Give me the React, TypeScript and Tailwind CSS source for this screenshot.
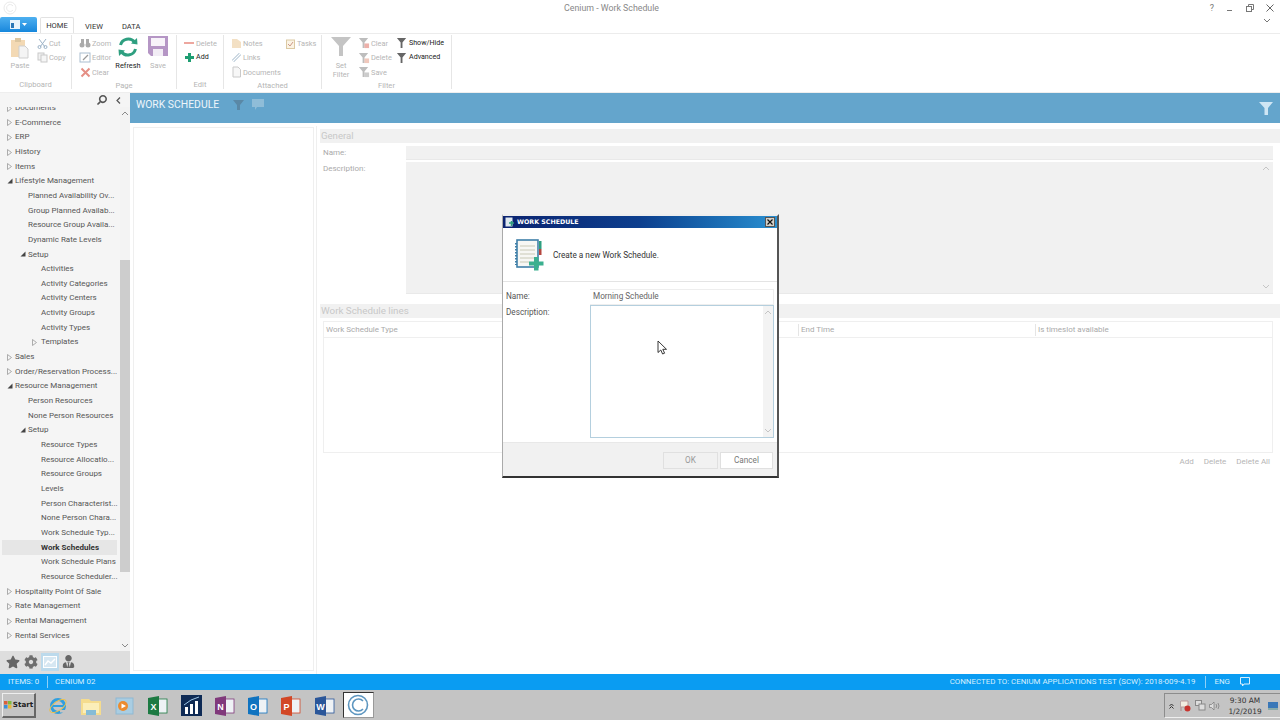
import React from "react";
import { FaCog, FaStar, FaUserTie, FaSearch } from "react-icons/fa";

const font = "font-['Roboto','Noto_Sans',sans-serif]";

type TreeRow = { label: string; level: number; arrow?: "open" | "closed"; selected?: boolean };

const tree: TreeRow[] = [
  { label: "Documents", level: 0, arrow: "closed" },
  { label: "E-Commerce", level: 0, arrow: "closed" },
  { label: "ERP", level: 0, arrow: "closed" },
  { label: "History", level: 0, arrow: "closed" },
  { label: "Items", level: 0, arrow: "closed" },
  { label: "Lifestyle Management", level: 0, arrow: "open" },
  { label: "Planned Availability Ov...", level: 1 },
  { label: "Group Planned Availab...", level: 1 },
  { label: "Resource Group Availa...", level: 1 },
  { label: "Dynamic Rate Levels", level: 1 },
  { label: "Setup", level: 1, arrow: "open" },
  { label: "Activities", level: 2 },
  { label: "Activity Categories", level: 2 },
  { label: "Activity Centers", level: 2 },
  { label: "Activity Groups", level: 2 },
  { label: "Activity Types", level: 2 },
  { label: "Templates", level: 2, arrow: "closed" },
  { label: "Sales", level: 0, arrow: "closed" },
  { label: "Order/Reservation Process...", level: 0, arrow: "closed" },
  { label: "Resource Management", level: 0, arrow: "open" },
  { label: "Person Resources", level: 1 },
  { label: "None Person Resources", level: 1 },
  { label: "Setup", level: 1, arrow: "open" },
  { label: "Resource Types", level: 2 },
  { label: "Resource Allocatio...", level: 2 },
  { label: "Resource Groups", level: 2 },
  { label: "Levels", level: 2 },
  { label: "Person Characterist...", level: 2 },
  { label: "None Person Chara...", level: 2 },
  { label: "Work Schedule Typ...", level: 2 },
  { label: "Work Schedules", level: 2, selected: true },
  { label: "Work Schedule Plans", level: 2 },
  { label: "Resource Scheduler...", level: 2 },
  { label: "Hospitality Point Of Sale", level: 0, arrow: "closed" },
  { label: "Rate Management", level: 0, arrow: "closed" },
  { label: "Rental Management", level: 0, arrow: "closed" },
  { label: "Rental Services", level: 0, arrow: "closed" },
];

function Chevron({ up = false, color = "#8a8a8a" }: { up?: boolean; color?: string }) {
  return (
    <svg width="8" height="5" viewBox="0 0 8 5">
      <path d={up ? "M1 4 L4 1 L7 4" : "M1 1 L4 4 L7 1"} fill="none" stroke={color} strokeWidth="1" />
    </svg>
  );
}

function TreeArrow({ kind }: { kind: "open" | "closed" }) {
  return kind === "open" ? (
    <svg width="6" height="6" viewBox="0 0 6 6">
      <path d="M5.5 0.5 V5.5 H0.5 Z" fill="#444" />
    </svg>
  ) : (
    <svg width="5" height="7" viewBox="0 0 5 7">
      <path d="M0.5 0.5 L4.5 3.5 L0.5 6.5 Z" fill="none" stroke="#999" strokeWidth="0.8" />
    </svg>
  );
}

function Sidebar() {
  return (
    <div className="flex w-[130px] flex-col bg-[#f5f5f5]">
      <div className="flex h-[14px] items-center justify-end gap-[9px] pr-[9px]">
        <FaSearch size={10} className="-scale-x-100 text-[#555]" />
        <svg width="5" height="7" viewBox="0 0 5 7">
          <path d="M4 0.5 L1 3.5 L4 6.5" fill="none" stroke="#555" strokeWidth="1.2" />
        </svg>
      </div>
      <div className="flex h-[544px] overflow-hidden">
        <div className="w-[120px] overflow-hidden pl-[2px]">
          <div className="-mt-[6.75px] flex flex-col">
            {tree.map((row, i) => (
              <div
                key={i}
                className={`relative flex h-[14.67px] w-[115px] items-center whitespace-nowrap text-[8px] leading-none ${
                  row.selected ? "bg-[#e6e6e6] font-bold text-[#333]" : "text-[#555]"
                } ${row.level === 0 ? "pl-[13px]" : row.level === 1 ? "pl-[26px]" : "pl-[39px]"}`}
              >
                {row.arrow && (
                  <span
                    className={`absolute top-[4px] ${
                      row.level === 0 ? "left-[5px]" : row.level === 1 ? "left-[18px]" : "left-[30px]"
                    }`}
                  >
                    <TreeArrow kind={row.arrow} />
                  </span>
                )}
                {row.label}
              </div>
            ))}
          </div>
        </div>
        <div className="flex w-[10px] flex-col bg-[#f3f3f3]">
          <div className="flex h-[12px] items-center justify-center">
            <Chevron up />
          </div>
          <div className="mt-[141px] h-[312px] w-[10px] bg-[#cdcdcd]" />
          <div className="mt-auto flex h-[12px] items-center justify-center">
            <Chevron />
          </div>
        </div>
      </div>
      <div className="flex h-[23px] items-center bg-[#dedede] pb-[2px] pl-[6px]">
        <FaStar size={14} className="text-[#666]" />
        <FaCog size={14} className="ml-[4px] text-[#6e6e6e]" />
        <div className="ml-[3px] flex h-[18px] w-[18px] items-center justify-center bg-[#bcdaec]">
          <svg width="14" height="12" viewBox="0 0 14 12">
            <rect x="0.5" y="0.5" width="13" height="11" fill="#d6e7f2" stroke="#fff" />
            <path d="M2 9 L5 5 L8 7 L12 3" fill="none" stroke="#fff" strokeWidth="1.4" />
          </svg>
        </div>
        <FaUserTie size={13} className="ml-[3px] text-[#666]" />
      </div>
    </div>
  );
}

function Clip() {
  return (
    <svg width="20" height="22" viewBox="0 0 20 22">
      <rect x="1" y="3" width="14" height="17" fill="#f3d9b4" />
      <rect x="5" y="1" width="6" height="4" fill="#dcc6a0" />
      <path d="M9 9 H15 L18 12 V21 H9 Z" fill="#f4f4f4" stroke="#cfcfcf" />
    </svg>
  );
}

function FilterIcon({ color = "#bdbdbd", badge }: { color?: string; badge?: string }) {
  return (
    <svg width="12" height="12" viewBox="0 0 13 13">
      <path d="M1 1 H11 L7 6 V12 H5 V6 Z" fill={color} />
      {badge && <rect x="7" y="7" width="5" height="5" fill={badge} opacity="0.7" />}
    </svg>
  );
}

function Small({ icon, label, dark = false }: { icon: React.ReactNode; label: string; dark?: boolean }) {
  return (
    <div
      className={`flex h-[14.5px] shrink-0 items-center gap-[1px] whitespace-nowrap ${
        dark ? "text-[7.1px] text-[#222]" : "text-[7.4px] text-[#b5b5b5]"
      }`}
    >
      <span className="flex w-[12px] justify-center">{icon}</span>
      {label}
    </div>
  );
}

function Group({ label, width, children }: { label: string; width: string; children: React.ReactNode }) {
  return (
    <div className={`flex h-[54px] flex-col border-r border-[#e6e6e6] ${width}`}>
      <div className="flex h-[44px] pt-[1px]">{children}</div>
      <div className="mt-[2px] text-center text-[7.6px] leading-[9px] text-[#b5b5b5]">{label}</div>
    </div>
  );
}

function Ribbon() {
  const g = "#c9c9c9";
  return (
    <div className="flex h-[60px] border-t border-[#ececec] bg-white pt-[1px]">
      <Group label="Clipboard" width="w-[72px]">
        <div className="flex w-[36px] flex-col items-center pl-[4px] pt-[1px] text-[7.4px] text-[#b5b5b5]">
          <Clip />
          <span className="mt-[1px]">Paste</span>
        </div>
        <div className="flex flex-col">
          <Small label="Cut" icon={<svg width="11" height="11" viewBox="0 0 11 11"><path d="M2 1 L8 9 M9 1 L3 9" stroke="#9db3c7" fill="none" /><circle cx="2.5" cy="9" r="1.5" fill="none" stroke="#9db3c7" /><circle cx="8.5" cy="9" r="1.5" fill="none" stroke="#9db3c7" /></svg>} />
          <Small label="Copy" icon={<svg width="11" height="11" viewBox="0 0 11 11"><rect x="1" y="1" width="6" height="7" fill="#f1f1f1" stroke={g} /><rect x="4" y="3" width="6" height="7" fill="#f6f6f6" stroke={g} /></svg>} />
        </div>
      </Group>
      <Group label="Page" width="w-[105px]">
        <div className="flex w-[42px] flex-col pl-[7px]">
          <Small label="Zoom" icon={<svg width="12" height="11" viewBox="0 0 12 11"><circle cx="3" cy="7" r="2.5" fill="#aaa" /><circle cx="9" cy="7" r="2.5" fill="#aaa" /><rect x="2" y="1" width="3" height="5" fill="#aaa" /><rect x="7" y="1" width="3" height="5" fill="#aaa" /></svg>} />
          <Small label="Editor" icon={<svg width="12" height="11" viewBox="0 0 12 11"><rect x="1" y="1" width="10" height="9" fill="#fff" stroke="#a9bdcf" /><path d="M4 8 L9 3" stroke="#999" strokeWidth="1.3" /></svg>} />
          <Small label="Clear" icon={<svg width="11" height="11" viewBox="0 0 11 11"><path d="M1.5 1.5 L9.5 9.5 M9.5 1.5 L1.5 9.5" stroke="#e58f85" strokeWidth="2" /></svg>} />
        </div>
        <div className="flex w-[28px] flex-col items-center text-[7.4px] text-[#222]">
          <svg width="22" height="22" viewBox="0 0 22 22">
            <path d="M3.5 9 A8 8 0 0 1 17.5 6" fill="none" stroke="#2e9f80" strokeWidth="3" />
            <path d="M14 7.5 L20.5 8.5 L20 2 Z" fill="#2e9f80" />
            <path d="M18.5 13 A8 8 0 0 1 4.5 16" fill="none" stroke="#2e9f80" strokeWidth="3" />
            <path d="M8 14.5 L1.5 13.5 L2 20 Z" fill="#2e9f80" />
          </svg>
          <span className="mt-[2px]">Refresh</span>
        </div>
        <div className="flex w-[32px] flex-col items-center text-[7.4px] text-[#b5b5b5]">
          <svg width="20" height="20" viewBox="0 0 20 20">
            <path d="M0 0 H20 V20 H3 L0 17 Z" fill="#b596c5" />
            <rect x="3" y="2" width="14" height="8" fill="#f7f3f9" />
            <rect x="5" y="13" width="10" height="7" fill="#f2edf5" />
          </svg>
          <span className="mt-[4px]">Save</span>
        </div>
      </Group>
      <Group label="Edit" width="w-[47px]">
        <div className="flex flex-col pl-[6px]">
          <Small label="Delete" icon={<div className="h-[2px] w-[10px] bg-[#eda79f]" />} />
          <Small
            dark
            label="Add"
            icon={<svg width="11" height="11" viewBox="0 0 11 11"><path d="M5.5 1 V10 M1 5.5 H10" stroke="#1f9e72" strokeWidth="3" /></svg>}
          />
        </div>
      </Group>
      <Group label="Attached" width="w-[98px]">
        <div className="flex w-[60px] flex-col pl-[6px]">
          <Small label="Notes" icon={<svg width="11" height="11" viewBox="0 0 11 11"><path d="M1 1 H6 L10 4 V10 H1 Z" fill="#f3e0c4" /></svg>} />
          <Small label="Links" icon={<svg width="11" height="11" viewBox="0 0 11 11"><path d="M2 9 L9 2" stroke="#a9bdcf" strokeWidth="3" /><path d="M2 9 L9 2" stroke="#fff" strokeWidth="1.2" /></svg>} />
          <Small label="Documents" icon={<svg width="11" height="12" viewBox="0 0 11 12"><path d="M2 1 H7 L9.5 3.5 V11 H2 Z" fill="#f7f7f7" stroke={g} /></svg>} />
        </div>
        <div className="flex flex-col">
          <Small label="Tasks" icon={<svg width="11" height="11" viewBox="0 0 11 11"><rect x="1.5" y="2" width="8" height="8.5" fill="#fbf3e4" stroke="#dcc9a3" /><path d="M3 6 L5 8 L8 4" fill="none" stroke="#c98" /></svg>} />
        </div>
      </Group>
      <Group label="Filter" width="w-[130px]">
        <div className="flex w-[36px] flex-col items-center pl-[2px] text-center text-[7.4px] leading-[9px] text-[#b5b5b5]">
          <svg width="20" height="20" viewBox="0 0 20 20">
            <path d="M0 1 H20 L12 10 V20 H8 V10 Z" fill="#c4c4c4" />
          </svg>
          <span className="mt-[5px]">Set</span>
          <span>Filter</span>
        </div>
        <div className="flex w-[38px] flex-col">
          <Small label="Clear" icon={<FilterIcon badge="#e58f85" />} />
          <Small label="Delete" icon={<FilterIcon badge="#e9b0a0" />} />
          <Small label="Save" icon={<FilterIcon badge="#b7b7b7" />} />
        </div>
        <div className="flex flex-col">
          <Small dark label="Show/Hide" icon={<FilterIcon color="#666" />} />
          <Small dark label="Advanced" icon={<FilterIcon color="#666" />} />
        </div>
      </Group>
    </div>
  );
}

function Field({ className }: { className: string }) {
  return <div className={`border-b border-[#e9e9e9] bg-[#f1f1f1] ${className}`} />;
}

function MainArea() {
  return (
    <div className="flex flex-1 flex-col">
      <div className="flex h-[30px] items-start bg-[#64a5cc] pl-[6px] pt-[4px]">
        <span className="text-[10.4px] leading-[15px] text-[#eef6fb]">WORK SCHEDULE</span>
        <svg width="11" height="11" viewBox="0 0 11 11" className="ml-[14px] mt-[2px]">
          <path d="M0 1 H11 L7 6 V11 H4 V6 Z" fill="#5a88a6" />
        </svg>
        <svg width="12" height="11" viewBox="0 0 12 11" className="ml-[8px] mt-[2px]">
          <path d="M0 0 H12 V8 H5 L3 11 V8 H0 Z" fill="#8fbdd8" />
        </svg>
        <svg width="14" height="14" viewBox="0 0 14 14" className="ml-auto mr-[7px] mt-[4px]">
          <path d="M0 1 H14 L9 7 V14 H5.5 V7 Z" fill="#cfe6f4" />
        </svg>
      </div>
      <div className="flex flex-1 bg-white">
        <div className="ml-[3px] mt-[4px] h-[544px] w-[181px] border border-[#efefef]" />
        <div className="ml-[2px] mt-[3px] w-[1px] bg-[#efefef]" />
        <div className="ml-[3px] flex flex-1 flex-col pt-[6px]">
          <div className="flex h-[14px] items-center bg-[#f1f1f1] pl-[1px] text-[9.6px] text-[#c8c8c8]">General</div>
          <div className="mt-[3px] flex h-[14px] items-center text-[8px] text-[#aaa]">
            <span className="w-[86px] pl-[3px]">Name:</span>
            <Field className="mr-[7px] h-[14px] flex-1" />
          </div>
          <div className="mt-[2px] flex h-[132px] text-[8px] text-[#aaa]">
            <span className="w-[86px] pl-[3px] pt-[1px]">Description:</span>
            <div className="relative mr-[7px] flex flex-1 flex-col items-end justify-between border-b border-[#e9e9e9] bg-[#f1f1f1] px-[3px] py-[4px]">
              <Chevron up color="#c5c5c5" />
              <Chevron color="#c5c5c5" />
            </div>
          </div>
          <div className="mt-[10px] flex h-[14px] items-center bg-[#f1f1f1] pl-[1px] text-[9.8px] text-[#c8c8c8]">
            Work Schedule lines
          </div>
          <div className="ml-[3px] mr-[7px] mt-[3px] flex h-[132px] flex-col border border-[#efefef]">
            <div className="grid h-[16px] grid-cols-[474px_237px_1fr] items-center border-b border-[#efefef] text-[8px] text-[#aaa]">
              <span className="pl-[2px]">Work Schedule Type</span>
              <span className="border-l border-[#e5e5e5] pl-[2px]">End Time</span>
              <span className="border-l border-[#e5e5e5] pl-[2px]">Is timeslot available</span>
            </div>
          </div>
          <div className="mr-[10px] mt-[3px] flex justify-end gap-[10px] text-[8px] text-[#b5b5b5]">
            <span>Add</span>
            <span>Delete</span>
            <span>Delete All</span>
          </div>
        </div>
      </div>
    </div>
  );
}

function DialogIcon() {
  return (
    <svg width="30" height="32" viewBox="0 0 30 32">
      <rect x="2" y="1" width="21" height="27" fill="#f7f7f4" stroke="#3f7fa8" strokeWidth="1.6" />
      <path d="M5 7 H20 M5 11 H20 M5 15 H20 M5 19 H20 M5 23 H14" stroke="#c9c9b6" />
      <path d="M1 4 V26" stroke="#3f7fa8" strokeWidth="2" strokeDasharray="1.5 1.5" />
      <rect x="24" y="2" width="2.5" height="8" fill="#2e9f80" />
      <rect x="24" y="10" width="2.5" height="6" fill="#b5473f" />
      <path d="M19 18 H23.5 V22.5 H28.5 V26.5 H23.5 V31.5 H19 V26.5 H14 V22.5 H19 Z" fill="#3bb08f" />
    </svg>
  );
}

function Dialog() {
  return (
    <div className="absolute left-[502px] top-[214px] flex h-[264px] w-[277px] flex-col border-b-2 border-l border-r-2 border-t-2 border-b-[#333] border-l-[#aaa] border-r-[#555] border-t-[#eee] bg-white">
      <div className="flex h-[12px] shrink-0 items-center bg-gradient-to-r from-[#0b2370] via-[#0d3f8e] to-[#2a8fd0] pl-[2px] pr-[2px]">
        <svg width="9" height="10" viewBox="0 0 9 10">
          <rect x="0.5" y="0.5" width="7" height="9" fill="#dfe8ef" />
          <path d="M4 6 H9 M6.5 4 V9" stroke="#2e9f80" strokeWidth="1.5" />
        </svg>
        <span className="ml-[3px] font-['DejaVu_Sans',sans-serif] text-[6.3px] font-bold leading-none text-white">WORK SCHEDULE</span>
        <span className="ml-auto flex h-[10px] w-[10px] items-center justify-center border border-[#555] bg-[#d4d0c8]">
          <svg width="6" height="6" viewBox="0 0 6 6">
            <path d="M0.5 0.5 L5.5 5.5 M5.5 0.5 L0.5 5.5" stroke="#111" strokeWidth="1.2" />
          </svg>
        </span>
      </div>
      <div className="flex h-[54px] shrink-0 items-center border-b border-[#e4e4e4] pl-[12px] text-[8.2px] text-[#333]">
        <DialogIcon />
        <span className="ml-[8px] mt-[2px]">Create a new Work Schedule.</span>
      </div>
      <div className="flex flex-1 text-[8.2px] text-[#555]">
        <div className="w-[87px] pl-[3px] pt-[8px]">
          <div className="h-[16px]">Name:</div>
          <div>Description:</div>
        </div>
        <div className="flex flex-1 flex-col pr-[3px] pt-[7px]">
          <div className="flex h-[16px] items-center border-b border-r border-t border-[#eeeeee] pb-[1px] pl-[3px] text-[#666]">
            Morning Schedule
          </div>
          <div className="flex h-[133px] justify-end border border-[#b4cfde]">
            <div className="flex w-[10px] flex-col items-center justify-between bg-[#f3f3f3] py-[4px]">
              <Chevron up color="#c5c5c5" />
              <Chevron color="#c5c5c5" />
            </div>
          </div>
        </div>
      </div>
      <div className="flex h-[34px] shrink-0 items-start justify-end gap-[2px] border-t border-[#e8e8e8] bg-[#f1f1f1] pr-[4px] pt-[9px] text-[8.2px] text-[#777]">
        <div className="flex h-[17px] w-[55px] items-center justify-center border border-[#e0e0e0] text-[#999]">OK</div>
        <div className="flex h-[17px] w-[53px] items-center justify-center border border-[#e0e0e0] bg-white">Cancel</div>
      </div>
    </div>
  );
}

function Office({ color, letter }: { color: string; letter: string }) {
  return (
    <svg width="20" height="20" viewBox="0 0 20 20">
      <rect x="9" y="3" width="10" height="14" fill="#eef2f5" stroke={color} strokeWidth="0.8" />
      <path d="M0 2 L11 0 V20 L0 18 Z" fill={color} />
      <text x="5.5" y="14" textAnchor="middle" fontSize="9" fontWeight="700" fill="#fff" fontFamily="Liberation Sans">
        {letter}
      </text>
    </svg>
  );
}

function Taskbar() {
  return (
    <div className="flex h-[30px] bg-[#c4c4c4]">
      <div className="ml-[2px] mt-[3px] flex h-[25px] w-[34px] items-center justify-center gap-[1px] border-b-2 border-l border-r-2 border-t border-b-[#666] border-l-[#eee] border-r-[#666] border-t-[#eee] font-['DejaVu_Sans',sans-serif] text-[7.2px] font-bold text-[#222]">
        <svg width="8" height="8" viewBox="0 0 8 8">
          <rect width="3.5" height="3.5" fill="#d9603b" />
          <rect x="4" width="3.5" height="3.5" fill="#7fba3a" />
          <rect y="4" width="3.5" height="3.5" fill="#3a8fd9" />
          <rect x="4" y="4" width="3.5" height="3.5" fill="#e8b93a" />
        </svg>
        Start
      </div>
      <div className="ml-[12px] flex items-center gap-[13.2px] pt-[1px]">
        <svg width="20" height="22" viewBox="0 0 20 22">
          <circle cx="10" cy="11" r="6.5" fill="none" stroke="#2f9fe0" strokeWidth="3" />
          <path d="M4 11 H16" stroke="#2f9fe0" strokeWidth="2" />
          <path d="M12 15 H17 V17.5 H12 Z" fill="#c4c4c4" />
          <ellipse cx="10" cy="11" rx="9.5" ry="4.5" fill="none" stroke="#e9c04f" strokeWidth="1" transform="rotate(-35 10 11)" />
        </svg>
        <svg width="20" height="20" viewBox="0 0 20 20">
          <path d="M0 3 H8 L10 5 H20 V19 H0 Z" fill="#f5dc8e" />
          <rect x="2" y="7" width="16" height="10" fill="#fbeeb9" />
          <rect x="5" y="14" width="10" height="5" fill="#86bcd6" />
        </svg>
        <svg width="20" height="20" viewBox="0 0 20 20">
          <rect x="2" y="2" width="17" height="16" fill="#a9cde2" stroke="#8fb8d2" />
          <circle cx="9" cy="10" r="5" fill="#ec8b2f" />
          <path d="M7.5 7.5 L12 10 L7.5 12.5 Z" fill="#fff" />
        </svg>
        <Office color="#1d7a43" letter="X" />
        <svg width="21" height="21" viewBox="0 0 21 21">
          <rect width="21" height="21" fill="#0e2a55" />
          <rect x="4" y="12" width="3" height="7" fill="#fff" />
          <rect x="9" y="9" width="3" height="10" fill="#fff" />
          <rect x="14" y="6" width="3" height="13" fill="#fff" />
          <path d="M3 10 L10 5 L18 2" fill="none" stroke="#9cc6e6" />
        </svg>
        <Office color="#80397b" letter="N" />
        <Office color="#0f73c0" letter="O" />
        <Office color="#d24726" letter="P" />
        <Office color="#2a5699" letter="W" />
      </div>
      <div className="ml-[8px] mt-[2px] flex h-[26px] w-[31px] items-center justify-center border border-[#333] border-b-[#999] border-r-[#999] bg-white">
        <svg width="22" height="22" viewBox="0 0 22 22">
          <circle cx="11" cy="11" r="9.5" fill="none" stroke="#5d96c0" strokeWidth="1.6" />
          <path d="M16 7 A6 6 0 1 0 16 15" fill="none" stroke="#5d96c0" strokeWidth="1.6" />
        </svg>
      </div>
      <div className="ml-auto mt-[3px] flex h-[25px] w-[116px] items-center border border-r-0 border-[#8c8c8c] border-b-[#eee] pl-[4px] text-[#333]">
        <svg width="5" height="6" viewBox="0 0 5 6" className="shrink-0">
          <path d="M0.5 3 L2.5 1 L4.5 3 M0.5 5.5 L2.5 3.5 L4.5 5.5" fill="none" stroke="#333" />
        </svg>
        <svg width="11" height="12" viewBox="0 0 11 12" className="ml-[6px] shrink-0">
          <path d="M1 1 V11" stroke="#a88" />
          <path d="M1 1 H8 V7 H1" fill="#f2ece0" stroke="#b99" />
          <circle cx="7.5" cy="8.5" r="3" fill="#c8342e" />
        </svg>
        <svg width="11" height="11" viewBox="0 0 11 11" className="ml-[4px] shrink-0">
          <rect x="0.5" y="0.5" width="6" height="5" fill="#ddd" stroke="#888" />
          <rect x="4" y="4" width="6" height="6" fill="#ddd" stroke="#888" />
        </svg>
        <svg width="11" height="10" viewBox="0 0 11 10" className="ml-[3px] shrink-0">
          <path d="M0.5 3.5 H2.5 L5 1 V9 L2.5 6.5 H0.5 Z" fill="#ddd" stroke="#777" strokeWidth="0.7" />
          <path d="M7 3 Q8.5 5 7 7 M9 2 Q11 5 9 8" fill="none" stroke="#777" strokeWidth="0.7" />
        </svg>
        <div className="ml-[7px] flex w-[36px] shrink-0 flex-col items-center font-['DejaVu_Sans',sans-serif] text-[7.4px] leading-[11px]">
          <span>9:30 AM</span>
          <span>1/2/2019</span>
        </div>
        <svg width="10" height="8" viewBox="0 0 10 8" className="ml-[5px] shrink-0">
          <rect width="10" height="6" fill="#3a78b8" />
          <rect y="6" width="10" height="2" fill="#8aa" />
        </svg>
      </div>
    </div>
  );
}

export default function App() {
  return (
    <div className={`relative flex h-[720px] w-[1280px] flex-col overflow-hidden bg-white ${font}`}>
      <div className="flex h-[17px] items-center text-[8.8px] text-[#888]">
        <svg width="14" height="14" viewBox="0 0 14 14" className="ml-[3px]">
          <circle cx="7" cy="7" r="6" fill="none" stroke="#eaeaea" />
          <path d="M10 5 A3.5 3.5 0 1 0 10 9" fill="none" stroke="#eaeaea" />
        </svg>
        <span className="ml-[547px]">Cenium - Work Schedule</span>
        <div className="ml-auto flex items-center pr-[6px] text-[#777]">
          <span className="text-[9px]">?</span>
          <span className="ml-[13px] mt-[4px] h-[1px] w-[5px] bg-[#777]" />
          <svg width="8" height="8" viewBox="0 0 8 8" className="ml-[14px]">
            <rect x="0.5" y="2.5" width="5" height="5" fill="none" stroke="#777" />
            <path d="M2.5 2.5 V0.5 H7.5 V5.5 H5.5" fill="none" stroke="#777" />
          </svg>
          <svg width="8" height="8" viewBox="0 0 8 8" className="ml-[12px]">
            <path d="M0.5 0.5 L7.5 7.5 M7.5 0.5 L0.5 7.5" stroke="#666" />
          </svg>
        </div>
      </div>
      <div className="flex h-[16px] items-start text-[7.6px] text-[#333]">
        <div className="flex h-[15px] w-[37px] items-center justify-center gap-[2px] rounded-t-[2px] bg-gradient-to-b from-[#4db0f0] to-[#1487dc]">
          <svg width="10" height="9" viewBox="0 0 10 9">
            <rect width="10" height="9" fill="#e8f4fb" />
            <rect x="1" y="3" width="3" height="5" fill="#2b77b5" />
          </svg>
          <svg width="5" height="3" viewBox="0 0 5 3">
            <path d="M0 0 H5 L2.5 3 Z" fill="#fff" />
          </svg>
        </div>
        <div className="ml-[3px] flex h-[16px] w-[34px] items-center justify-center rounded-t-[2px] border border-b-0 border-[#e2e2e2] bg-white">HOME</div>
        <span className="ml-[11px] mt-[4px]">VIEW</span>
        <span className="ml-[19px] mt-[4px]">DATA</span>
        <span className="ml-auto mr-[9px] mt-[1px]">
          <Chevron color="#777" />
        </span>
      </div>
      <Ribbon />
      <div className="h-[1px] bg-[#eeeeee]" />
      <div className="flex flex-1">
        <Sidebar />
        <MainArea />
      </div>
      <div className="flex h-[16px] items-center bg-[#0a9cf2] text-[7.9px] text-[#d8effd]">
        <span className="ml-[8px]">ITEMS: 0</span>
        <span className="ml-[8px] h-[12px] w-[1px] bg-[#8fd0f7]" />
        <span className="ml-[7px]">CENIUM 02</span>
        <span className="ml-auto">CONNECTED TO: CENIUM APPLICATIONS TEST (SCW): 2018-009-4.19</span>
        <span className="ml-[9px] h-[12px] w-[1px] bg-[#8fd0f7]" />
        <span className="ml-[9px]">ENG</span>
        <svg width="10" height="10" viewBox="0 0 10 10" className="ml-[10px] mr-[30px]">
          <path d="M0.5 0.5 H9.5 V7 H4 L2.5 9 V7 H0.5 Z" fill="none" stroke="#d8effd" />
        </svg>
      </div>
      <Taskbar />
      <Dialog />
      <svg width="12" height="16" viewBox="0 0 12 16" className="absolute left-[657px] top-[340px]">
        <path d="M1 1 V12.5 L3.8 10 L5.6 14 L7.6 13.2 L5.8 9.3 H9.5 Z" fill="#fff" stroke="#222" strokeWidth="0.9" />
      </svg>
    </div>
  );
}
